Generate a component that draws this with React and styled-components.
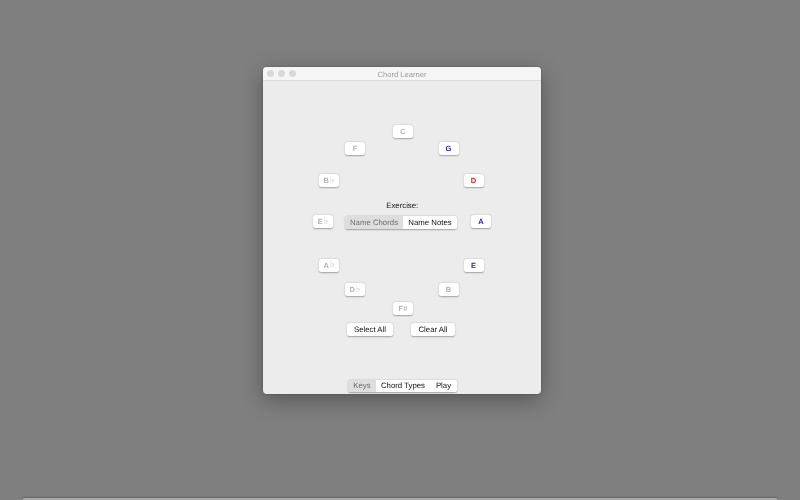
import React from 'react';
import styled, { createGlobalStyle } from 'styled-components';

const GlobalStyle = createGlobalStyle`
  html, body {
    margin: 0;
    padding: 0;
    height: 100%;
    background: #7f7f7f;
    font-family: "Liberation Sans", Arial, sans-serif;
    text-rendering: geometricPrecision;
  }
  #root {
    height: 100%;
  }
`;

const Desktop = styled.div`
  width: 800px;
  height: 500px;
  overflow: hidden;
  position: relative;
  background: #7f7f7f;
  padding: 67px 0 0 263px;
  box-sizing: border-box;
`;

const Dock = styled.div`
  position: absolute;
  left: 22px;
  right: 22px;
  bottom: -3px;
  height: 5px;
  background: #a9a9a9;
  border-radius: 3px 3px 0 0;
  box-shadow: 0 -1px 2px rgba(0, 0, 0, 0.2);
`;

const Window = styled.div`
  width: 278px;
  height: 327px;
  display: flex;
  flex-direction: column;
  background: #ececec;
  border-radius: 4px;
  overflow: hidden;
  box-shadow: 0 6px 22px rgba(0, 0, 0, 0.32), 0 0 2px rgba(0, 0, 0, 0.3);
  filter: blur(0.3px);
  will-change: transform;
`;

const TitleBar = styled.div`
  height: 13px;
  flex: none;
  position: relative;
  display: flex;
  align-items: center;
  justify-content: center;
  background: #f5f5f5;
  border-bottom: 1px solid #dcdcdc;
`;

const Lights = styled.div`
  position: absolute;
  left: 3.5px;
  top: 2.5px;
  display: flex;
  gap: 3.5px;
`;

const Light = styled.span`
  width: 7.5px;
  height: 7.5px;
  border-radius: 50%;
  background: #d9d9d9;
`;

const Title = styled.span`
  font-size: 7.6px;
  color: #9c9c9c;
  padding-top: 1px;
`;

const Content = styled.div`
  flex: 1;
  position: relative;
  display: flex;
  flex-direction: column;
  align-items: center;
  padding: 119px 2px 0 0;
  box-sizing: border-box;
`;

const Label = styled.div`
  font-size: 7.8px;
  line-height: 12px;
  color: #111;
  margin: 0 0 4px 2.5px;
`;

const Segmented = styled.div`
  display: flex;
  height: 12.5px;
  border-radius: 2.5px;
  overflow: hidden;
  background: #fff;
  box-shadow: 0 0.5px 1.5px rgba(0, 0, 0, 0.32);
`;

const Segment = styled.div`
  width: ${(p) => p.$width}px;
  display: flex;
  align-items: center;
  justify-content: center;
  font-size: 7.8px;
  color: ${(p) => (p.$active ? '#6c6c6c' : '#111')};
  background: ${(p) => (p.$active ? '#dedede' : '#fff')};
`;

const ActionRow = styled.div`
  display: flex;
  gap: 18px;
  margin-top: 94.5px;
`;

const ActionButton = styled.div`
  height: 12.5px;
  width: ${(p) => p.$width}px;
  display: flex;
  align-items: center;
  justify-content: center;
  font-size: 7.8px;
  color: #111;
  background: #fff;
  border-radius: 2.5px;
  box-shadow: 0 0.5px 1.5px rgba(0, 0, 0, 0.32);
`;

const Footer = styled.div`
  flex: none;
  display: flex;
  justify-content: center;
  padding: 0 0 2px 1px;
`;

// keys sit around the circle of fifths, so their spot is the content
const Key = styled.div`
  position: absolute;
  width: 20px;
  height: 13px;
  display: flex;
  align-items: center;
  justify-content: center;
  gap: 1px;
  font-size: 7.5px;
  font-weight: 700;
  color: ${(p) => p.$color};
  background: #fff;
  border-radius: 2.5px;
  box-shadow: 0 0.5px 1.5px rgba(0, 0, 0, 0.32);
`;

const Flat = styled.span`
  font-family: "DejaVu Sans", sans-serif;
  font-weight: 400;
  font-size: 10px;
  line-height: 1;
  color: #c6c6c6;
`;

const MUTED = '#b4b4b4';
const BLUE = '#2a22c8';
const RED = '#d8221e';

const keys = [
  { name: 'C', x: 130, y: 43.5, color: MUTED },
  { name: 'F', x: 82, y: 60.5, color: MUTED },
  { name: 'G', x: 175.5, y: 60.5, color: BLUE },
  { name: 'B', flat: true, x: 56, y: 93, color: MUTED },
  { name: 'D', x: 200.5, y: 93, color: RED },
  { name: 'E', flat: true, x: 50, y: 134, color: MUTED },
  { name: 'A', x: 208, y: 134, color: BLUE },
  { name: 'A', flat: true, x: 56, y: 177.5, color: MUTED },
  { name: 'E', x: 200.5, y: 177.5, color: BLUE },
  { name: 'D', flat: true, x: 82, y: 202, color: MUTED },
  { name: 'B', x: 175.5, y: 202, color: MUTED },
  { name: 'F#', x: 130, y: 221, color: MUTED },
];

export default function App() {
  return (
    <Desktop>
      <GlobalStyle />
      <Window>
        <TitleBar>
          <Lights>
            <Light />
            <Light />
            <Light />
          </Lights>
          <Title>Chord Learner</Title>
        </TitleBar>
        <Content>
          {keys.map((k) => (
            <Key
              key={k.name + (k.flat ? 'b' : '')}
              $color={k.color}
              style={{ left: k.x, top: k.y }}
            >
              {k.name}
              {k.flat && <Flat>♭</Flat>}
            </Key>
          ))}
          <Label>Exercise:</Label>
          <Segmented>
            <Segment $active $width={58}>Name Chords</Segment>
            <Segment $width={54}>Name Notes</Segment>
          </Segmented>
          <ActionRow>
            <ActionButton $width={46}>Select All</ActionButton>
            <ActionButton $width={44}>Clear All</ActionButton>
          </ActionRow>
        </Content>
        <Footer>
          <Segmented>
            <Segment $active $width={28}>Keys</Segment>
            <Segment $width={54}>Chord Types</Segment>
            <Segment $width={27}>Play</Segment>
          </Segmented>
        </Footer>
      </Window>
      <Dock />
    </Desktop>
  );
}
